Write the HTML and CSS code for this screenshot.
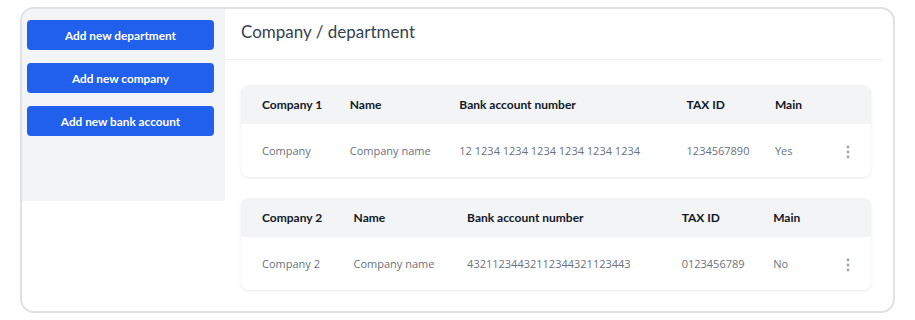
FILE: index.html
```html
<!DOCTYPE html>
<html lang="en">
<head>
<meta charset="utf-8">
<title>Company / department</title>
<link rel="stylesheet" href="styles.css">
</head>
<body>
<div class="frame">
  <aside class="sidebar">
    <button class="btn">Add new department</button>
    <button class="btn">Add new company</button>
    <button class="btn">Add new bank account</button>
  </aside>
  <main class="main">
    <header class="main-header">
      <h1 class="title">Company / department</h1>
    </header>
    <section class="cards">
      <div class="card">
        <table class="tbl">
          <thead>
            <tr><th>Company 1</th><th>Name</th><th>Bank account number</th><th>TAX ID</th><th>Main</th><th class="act"></th></tr>
          </thead>
          <tbody>
            <tr><td>Company</td><td>Company name</td><td>12 1234 1234 1234 1234 1234 1234</td><td>1234567890</td><td>Yes</td>
              <td class="act"><svg class="kebab" width="4" height="14" viewBox="0 0 4 14"><circle cx="2" cy="2" r="1.4"/><circle cx="2" cy="7" r="1.4"/><circle cx="2" cy="12" r="1.4"/></svg></td></tr>
          </tbody>
        </table>
      </div>
      <div class="card">
        <table class="tbl">
          <thead>
            <tr><th>Company 2</th><th>Name</th><th>Bank account number</th><th>TAX ID</th><th>Main</th><th class="act"></th></tr>
          </thead>
          <tbody>
            <tr><td>Company 2</td><td>Company name</td><td>43211234432112344321123443</td><td>0123456789</td><td>No</td>
              <td class="act"><svg class="kebab" width="4" height="14" viewBox="0 0 4 14"><circle cx="2" cy="2" r="1.4"/><circle cx="2" cy="7" r="1.4"/><circle cx="2" cy="12" r="1.4"/></svg></td></tr>
          </tbody>
        </table>
      </div>
    </section>
  </main>
</div>
</body>
</html>
```
FILE: styles.css
```css
* { box-sizing: border-box; }
html, body { margin: 0; padding: 0; background: #fff; }
body { font-family: "Lato", "Open Sans", sans-serif; }

.frame {
  margin: 7px 20px 0 20px;
  width: 875px;
  height: 306px;
  border: 2px solid #e1e1e1;
  border-radius: 14px;
  overflow: hidden;
  display: flex;
  align-items: flex-start;
}

.sidebar {
  width: 203px;
  height: 192px;
  background: #f3f4f6;
  padding: 11px 11px 0 5px;
  display: flex;
  flex-direction: column;
  gap: 13px;
  flex-shrink: 0;
}

.btn {
  height: 30px;
  width: 100%;
  border: 0;
  border-radius: 4px;
  background: #2160ec;
  color: #fff;
  font-family: inherit;
  font-size: 11.8px;
  font-weight: 700;
  cursor: pointer;
}

.main {
  flex: 1;
  min-width: 0;
  padding-right: 10px;
}

.main-header {
  height: 51px;
  border-bottom: 1px solid #f1f2f4;
  padding: 0 16px 5px 16px;
  display: flex;
  align-items: center;
}

.title {
  margin: 0;
  font-size: 17px;
  font-weight: 400;
  color: #374151;
}

.cards {
  padding: 25px 12px 0 16px;
  display: flex;
  flex-direction: column;
  gap: 21px;
}

.card {
  border-radius: 8px;
  background: #fff;
  box-shadow: 0 1px 3px rgba(0, 0, 0, 0.09);
  overflow: hidden;
}

.tbl {
  width: 100%;
  border-collapse: collapse;
}

.tbl th {
  background: #f3f4f6;
  color: #111827;
  font-size: 12px;
  font-weight: 700;
  text-align: left;
  height: 39px;
  padding: 0 6px;
  white-space: nowrap;
}

.tbl td {
  color: #6b7280;
  font-family: "Open Sans", sans-serif;
  font-size: 11px;
  height: 53px;
  padding: 0 6px;
  white-space: nowrap;
}

.tbl th:first-child,
.tbl td:first-child { padding-left: 21px; }

.tbl .act { width: 56px; padding: 0 21px 0 0; text-align: right; }

.kebab { fill: #9ca3af; display: inline-block; vertical-align: middle; }
```
